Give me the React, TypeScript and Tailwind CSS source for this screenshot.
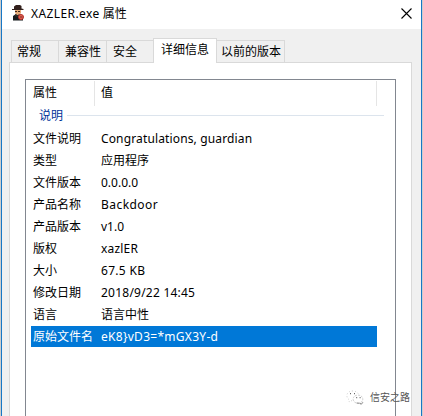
import React from "react";

type Property = { name: string; value: string; spacing: string };

const properties: Property[] = [
  { name: "文件说明", value: "Congratulations, guardian", spacing: "tracking-[0.14px]" },
  { name: "类型", value: "应用程序", spacing: "" },
  { name: "文件版本", value: "0.0.0.0", spacing: "" },
  { name: "产品名称", value: "Backdoor", spacing: "tracking-[0.45px]" },
  { name: "产品版本", value: "v1.0", spacing: "" },
  { name: "版权", value: "xazlER", spacing: "tracking-[0.2px]" },
  { name: "大小", value: "67.5 KB", spacing: "tracking-[0.3px]" },
  { name: "修改日期", value: "2018/9/22 14:45", spacing: "tracking-[0.23px]" },
  { name: "语言", value: "语言中性", spacing: "" },
  { name: "原始文件名", value: "eK8}vD3=*mGX3Y-d", spacing: "tracking-[0.28px]" },
];

function AgentIcon() {
  return (
    <svg width="14" height="16" viewBox="0 0 14 16" className="shrink-0">
      <path d="M1 15.5V11l3-2h4l3 3v3.5z" fill="#171b1d" />
      <path d="M3 4.5h6v3.5L7.5 10H5L3 8z" fill="#e5aa78" />
      <path d="M3 6h2v1H3zm3 0h2v1H6z" fill="#3a2419" />
      <path d="M2 4V1.5L4 0h4l1.5 1v2.5l2 .5v1H0V4z" fill="#33201c" />
      <path d="M3 9l2 1.5L7.5 9v2l-2.5 1-2-1z" fill="#302b29" />
      <circle cx="9" cy="12" r="2.5" fill="#e56655" stroke="#b62f2a" strokeWidth="1" />
      <path d="M8 11.5h2.5v1H8z" fill="#7d2925" />
    </svg>
  );
}

function WeChatIcon() {
  return (
    <svg width="18" height="15" viewBox="0 0 18 15" fill="none" stroke="#b0b0b0" strokeWidth=".6" className="shrink-0">
      <path d="M6 10.5l-3 1.5.5-2C-1 7 .5 1.3 6.3 1 10 .8 12.6 3 12.5 5" strokeDasharray="1 2" />
      <path d="M14.7 12.6c4-2.7 1.8-7.5-2.5-7.5-7 0-6.5 8.2 0 8.2l2.9.9z" strokeDasharray="2 1" />
      <path d="M4 3.7h1m3 0h1m1.2 4h1m2.4 0h1" stroke="#444" strokeWidth="1" />
      <path d="M10.5 13l3 .2 2 .9 1.5-2" stroke="#777" strokeWidth=".8" />
    </svg>
  );
}

function Tab({ label, className }: { label: string; className: string }) {
  return (
    <div className={`shrink-0 border-[#d9d9d9] whitespace-nowrap ${className}`}>{label}</div>
  );
}

export default function App() {
  return (
    <div className="relative h-[416px] w-[423px] overflow-hidden border-x border-[#cdcdcd] bg-[#f0f0f0] font-['Noto_Sans','Noto_Sans_CJK_SC',sans-serif] text-[12px] text-black">
      <div className="flex h-full flex-col border-x border-[#1877c5]">
        <header className="flex h-[29px] shrink-0 items-start bg-white pt-[5px] pr-[9px] pl-[10px]">
          <AgentIcon />
          <h1 className="ml-[5px] h-[18px] text-[12px] leading-[18px]">
            <span className="tracking-[0.4px]">XAZLER.exe</span> 属性
          </h1>
          <svg width="11" height="11" viewBox="0 0 11 11" stroke="#000" strokeWidth="1.1" className="mt-[3px] ml-auto">
            <path d="M.5.5l10 10M10.5.5l-10 10" />
          </svg>
        </header>
        <nav className="z-10 mt-[9px] -mb-px flex h-[25px] shrink-0 items-end pl-[9px] leading-[18px]">
          <Tab label="常规" className="h-[23px] w-[47px] border border-r-0 pt-[2px] pl-[5px]" />
          <Tab label="兼容性" className="h-[23px] w-[48px] border border-r-0 pt-[2px] pl-[6px]" />
          <Tab label="安全" className="h-[23px] w-[47px] border border-r-0 pt-[2px] pl-[6px]" />
          <Tab label="详细信息" className="h-[25px] w-[64px] border border-b-0 bg-white pt-[2px] pl-[7px]" />
          <Tab label="以前的版本" className="h-[23px] w-[68px] border border-l-0 pt-[2px] pl-[4px]" />
        </nav>
        <main className="mr-[9px] ml-[7px] min-h-0 flex-1 border border-b-0 border-[#d9d9d9] bg-white pt-[16px] pr-[15px] pl-[15px]">
          <section className="h-full border border-b-0 border-[#828790] pt-px pl-[5px]">
            <div className="flex h-[25px] leading-[24px]">
              <div className="w-[64px] border-r border-[#e5e5e5] pl-[2px]">属性</div>
              <div className="w-[282px] border-r border-[#e5e5e5] pl-[6px]">值</div>
            </div>
            <div className="flex h-[22px] items-start pl-[8px] leading-[20px] text-[#003399]">
              <span>说明</span>
              <span className="mt-[9px] ml-[4px] h-px w-[317px] bg-[#dce4ed]" />
            </div>
            {properties.map(({ name, value, spacing }) => (
              <div key={name} className={`flex w-[346px] items-start pl-[2px] leading-[22px] ${name === "原始文件名" ? "h-[21px] bg-[#0078d7] text-white" : "h-[22px]"}`}>
                <span className="w-[68px] shrink-0">{name}</span>
                <span className={`whitespace-pre ${spacing}`}>{value}</span>
              </div>
            ))}
          </section>
        </main>
      </div>
      <div className="absolute top-[389px] left-[345px] flex items-center gap-[6px] text-[10px] leading-[16px] text-[#555]">
        <WeChatIcon />
        <span>信安之路</span>
      </div>
    </div>
  );
}
